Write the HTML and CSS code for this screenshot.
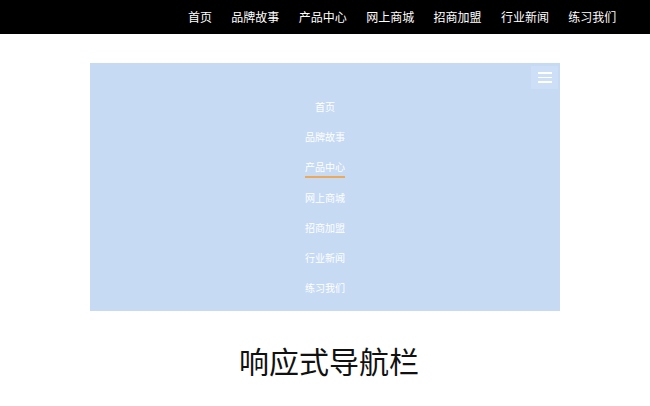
FILE: index.html
```html
<!DOCTYPE html>
<html lang="zh-CN">
<head>
<meta charset="utf-8">
<title>响应式导航栏</title>
<link rel="stylesheet" href="styles.css">
</head>
<body>
<header class="topbar">
  <ul class="topnav">
    <li>首页</li>
    <li>品牌故事</li>
    <li>产品中心</li>
    <li>网上商城</li>
    <li>招商加盟</li>
    <li>行业新闻</li>
    <li>练习我们</li>
  </ul>
</header>
<section class="panel">
  <div class="panel-head">
    <button class="toggle" aria-label="菜单">
      <span></span><span></span><span></span>
    </button>
  </div>
  <ul class="menu">
    <li><span>首页</span></li>
    <li><span>品牌故事</span></li>
    <li><span class="active">产品中心</span></li>
    <li><span>网上商城</span></li>
    <li><span>招商加盟</span></li>
    <li><span>行业新闻</span></li>
    <li><span>练习我们</span></li>
  </ul>
</section>
<h1 class="title">响应式导航栏</h1>
</body>
</html>
```
FILE: styles.css
```css
* { box-sizing: border-box; }
html, body { margin: 0; padding: 0; }
body {
  background: #ffffff;
  font-family: "Noto Sans CJK SC", "Noto Sans", sans-serif;
  width: 650px;
}
ul { list-style: none; margin: 0; padding: 0; }

.topbar {
  background: #000000;
  height: 34px;
  display: flex;
  justify-content: flex-end;
  align-items: center;
  padding-right: 24px;
}
.topnav {
  display: flex;
}
.topnav li {
  color: #ffffff;
  font-size: 12px;
  line-height: 34px;
  padding: 0 9.7px;
}

.panel {
  width: 470px;
  height: 248px;
  margin: 29px auto 0;
  background: #c6daf4;
  display: flex;
  flex-direction: column;
}
.panel-head {
  height: 29px;
  display: flex;
  justify-content: flex-end;
  align-items: flex-start;
  padding-top: 3px;
  padding-right: 2px;
}
.toggle {
  width: 27px;
  height: 23px;
  border: none;
  padding: 0;
  background: #cddff6;
  display: flex;
  flex-direction: column;
  justify-content: center;
  align-items: center;
  gap: 3px;
}
.toggle span {
  display: block;
  width: 14px;
  height: 1.5px;
  background: #ffffff;
}
.menu li {
  height: 30.2px;
  display: flex;
  justify-content: center;
  align-items: center;
}
.menu span {
  color: #ffffff;
  font-size: 10px;
  line-height: 14px;
}
.menu span.active {
  border-bottom: 2px solid #eda85a;
  padding-bottom: 2px;
  margin-bottom: -4px;
}

.title {
  margin: 28px 0 0;
  text-align: center;
  font-size: 30px;
  font-weight: normal;
  line-height: 42px;
  color: #111111;
  padding-left: 8px;
}
```
